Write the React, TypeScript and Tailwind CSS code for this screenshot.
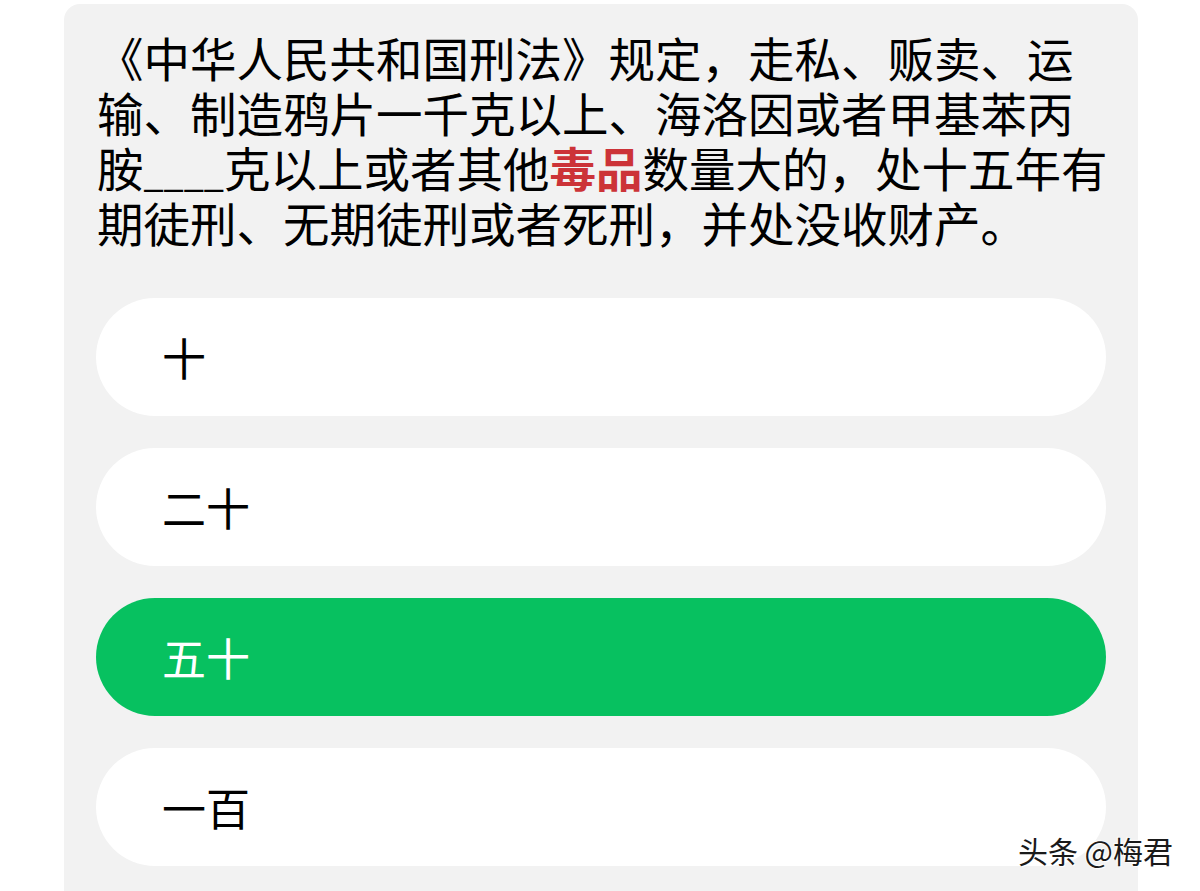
const LINES: React.ReactNode[] = [
  "《中华人民共和国刑法》规定，走私、贩卖、运",
  "输、制造鸦片一千克以上、海洛因或者甲基苯丙",
  <>
    胺<span className="text-[36px] leading-none">____</span>克以上或者其他
    <span className="font-bold text-[#cc3338]">毒品</span>
    数量大的，处十五年有
  </>,
  "期徒刑、无期徒刑或者死刑，并处没收财产。",
];

const OPTIONS = [
  { label: "十", selected: false },
  { label: "二十", selected: false },
  { label: "五十", selected: true },
  { label: "一百", selected: false },
];

export default function App() {
  return (
    <div
      className="relative min-h-[891px] bg-white overflow-hidden"
      style={{ fontFamily: '"Noto Sans CJK SC", "Noto Sans", sans-serif' }}
    >
      <div className="ml-[64px] mt-[4px] w-[1074px] rounded-t-[16px] bg-[#f2f2f2] px-[32px] pt-[25px] pb-[40px]">
        <div className="pl-[1px] text-[46.5px] leading-[55px] text-black">
          {LINES.map((line, i) => (
            <div key={i} className="h-[55px] whitespace-nowrap">
              {line}
            </div>
          ))}
        </div>

        <div className="mt-[49px] flex flex-col gap-[32px]">
          {OPTIONS.map((opt) => (
            <div
              key={opt.label}
              className={
                opt.selected
                  ? "flex h-[118px] items-center rounded-full bg-[#07c160] pl-[66px] text-[44px] text-white"
                  : "flex h-[118px] items-center rounded-full bg-white pl-[66px] text-[44px] text-black"
              }
            >
              {opt.label}
            </div>
          ))}
        </div>
      </div>

      <div
        className="absolute right-[27px] top-[835px] text-[30px] leading-none text-[#1a1a1a]"
        style={{ textShadow: "0 0 2px #fff, 1px 1px 1px #fff, -1px -1px 1px #fff" }}
      >
        头条 @梅君
      </div>
    </div>
  );
}
